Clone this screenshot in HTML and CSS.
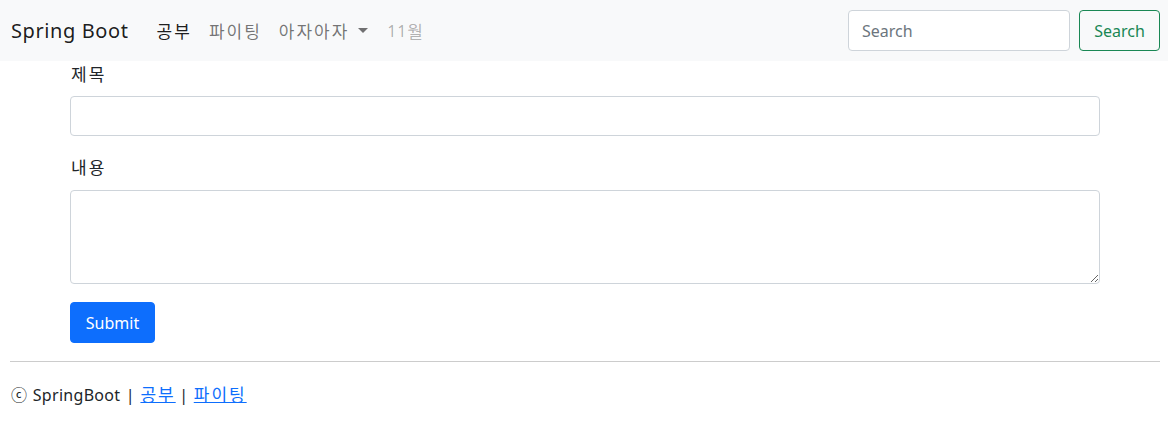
FILE: index.html
```html
<!DOCTYPE html>
<html lang="ko">
<head>
<meta charset="utf-8">
<title>Spring Boot</title>
<link rel="stylesheet" href="styles.css">
</head>
<body>
<nav class="navbar">
  <a class="brand" href="#">Spring Boot</a>
  <ul class="nav">
    <li><a class="nav-link active" href="#"><span class="ko">공부</span></a></li>
    <li><a class="nav-link" href="#"><span class="ko">파이팅</span></a></li>
    <li><a class="nav-link dropdown" href="#"><span class="ko">아자아자</span><span class="caret"></span></a></li>
    <li><a class="nav-link disabled">11<span class="ko">월</span></a></li>
  </ul>
  <form class="search">
    <input class="search-input" type="search" placeholder="Search">
    <button class="btn-search" type="button">Search</button>
  </form>
</nav>
<main class="container">
  <form class="post-form">
    <div class="field">
      <label class="label"><span class="ko">제목</span></label>
      <input class="control" type="text">
    </div>
    <div class="field">
      <label class="label"><span class="ko">내용</span></label>
      <textarea class="control area"></textarea>
    </div>
    <button class="btn-submit" type="button">Submit</button>
  </form>
</main>
<footer class="footer">
  <hr class="rule">
  <p class="foot-text">ⓒ SpringBoot | <a href="#"><span class="ko">공부</span></a> | <a href="#"><span class="ko">파이팅</span></a></p>
</footer>
</body>
</html>
```
FILE: styles.css
```css
* { box-sizing: border-box; }
body {
  margin: 0;
  font-family: "Noto Sans", "Noto Sans CJK KR", sans-serif;
  font-size: 16px;
  letter-spacing: 0.3px;
  color: #212529;
  background: #fff;
}
.ko {
  font-size: 17px;
  letter-spacing: 2px;
  margin-right: -2px;
}
.navbar {
  display: flex;
  align-items: center;
  height: 61px;
  padding: 0 8px 0 11px;
  background: #f8f9fa;
}
.brand {
  font-size: 20px;
  letter-spacing: 0.6px;
  color: rgba(0,0,0,.9);
  text-decoration: none;
  margin-right: 20px;
}
.nav {
  display: flex;
  list-style: none;
  margin: 0;
  padding: 0;
  flex: 1;
}
.nav-link {
  display: flex;
  align-items: center;
  padding: 8px 11px 8px 8px;
  color: rgba(0,0,0,.55);
  text-decoration: none;
  font-size: 16px;
}
.nav-link.active { color: rgba(0,0,0,.9); }
.nav-link.disabled { color: rgba(0,0,0,.3); letter-spacing: 0.8px; }
.caret {
  display: inline-block;
  margin-left: 11px;
  width: 0; height: 0;
  border-left: 5px solid transparent;
  border-right: 5px solid transparent;
  border-top: 5px solid rgba(0,0,0,.55);
}
.search { display: flex; gap: 9px; }
.search-input {
  width: 222px;
  height: 41px;
  padding: 6px 13px;
  font: inherit;
  font-size: 16px;
  border: 1px solid #ced4da;
  border-radius: 4px;
  background: #fff;
}
.search-input::placeholder { color: #6c757d; }
.btn-search {
  width: 81px;
  height: 41px;
  font: inherit;
  font-size: 16px;
  color: #198754;
  background: transparent;
  border: 1px solid #198754;
  border-radius: 4px;
}
.container {
  padding: 0 68px 0 70px;
}
.post-form { display: flex; flex-direction: column; align-items: flex-start; }
.field {
  display: flex;
  flex-direction: column;
  width: 100%;
  margin-bottom: 18px;
}
.label {
  display: block;
  margin: 1px 0 8px 1px;
  line-height: 26px;
  height: 26px;
}
.control {
  display: block;
  width: 100%;
  height: 40px;
  font: inherit;
  border: 1px solid #ced4da;
  border-radius: 4px;
  padding: 6px 12px;
}
.area { height: 94px; margin-top: 1px; resize: vertical; }
.btn-submit {
  width: 85px;
  height: 41px;
  font: inherit;
  color: #fff;
  background: #0d6efd;
  border: 1px solid #0d6efd;
  border-radius: 4px;
}
.footer { padding: 0 8px 0 10px; }
.rule {
  margin: 18px 0 0;
  border: 0;
  border-top: 1px solid #ccc;
}
.foot-text {
  margin: 20px 0 0 1px;
  line-height: 26px;
  word-spacing: 1px;
}
.foot-text a { color: #0d6efd; }
```
